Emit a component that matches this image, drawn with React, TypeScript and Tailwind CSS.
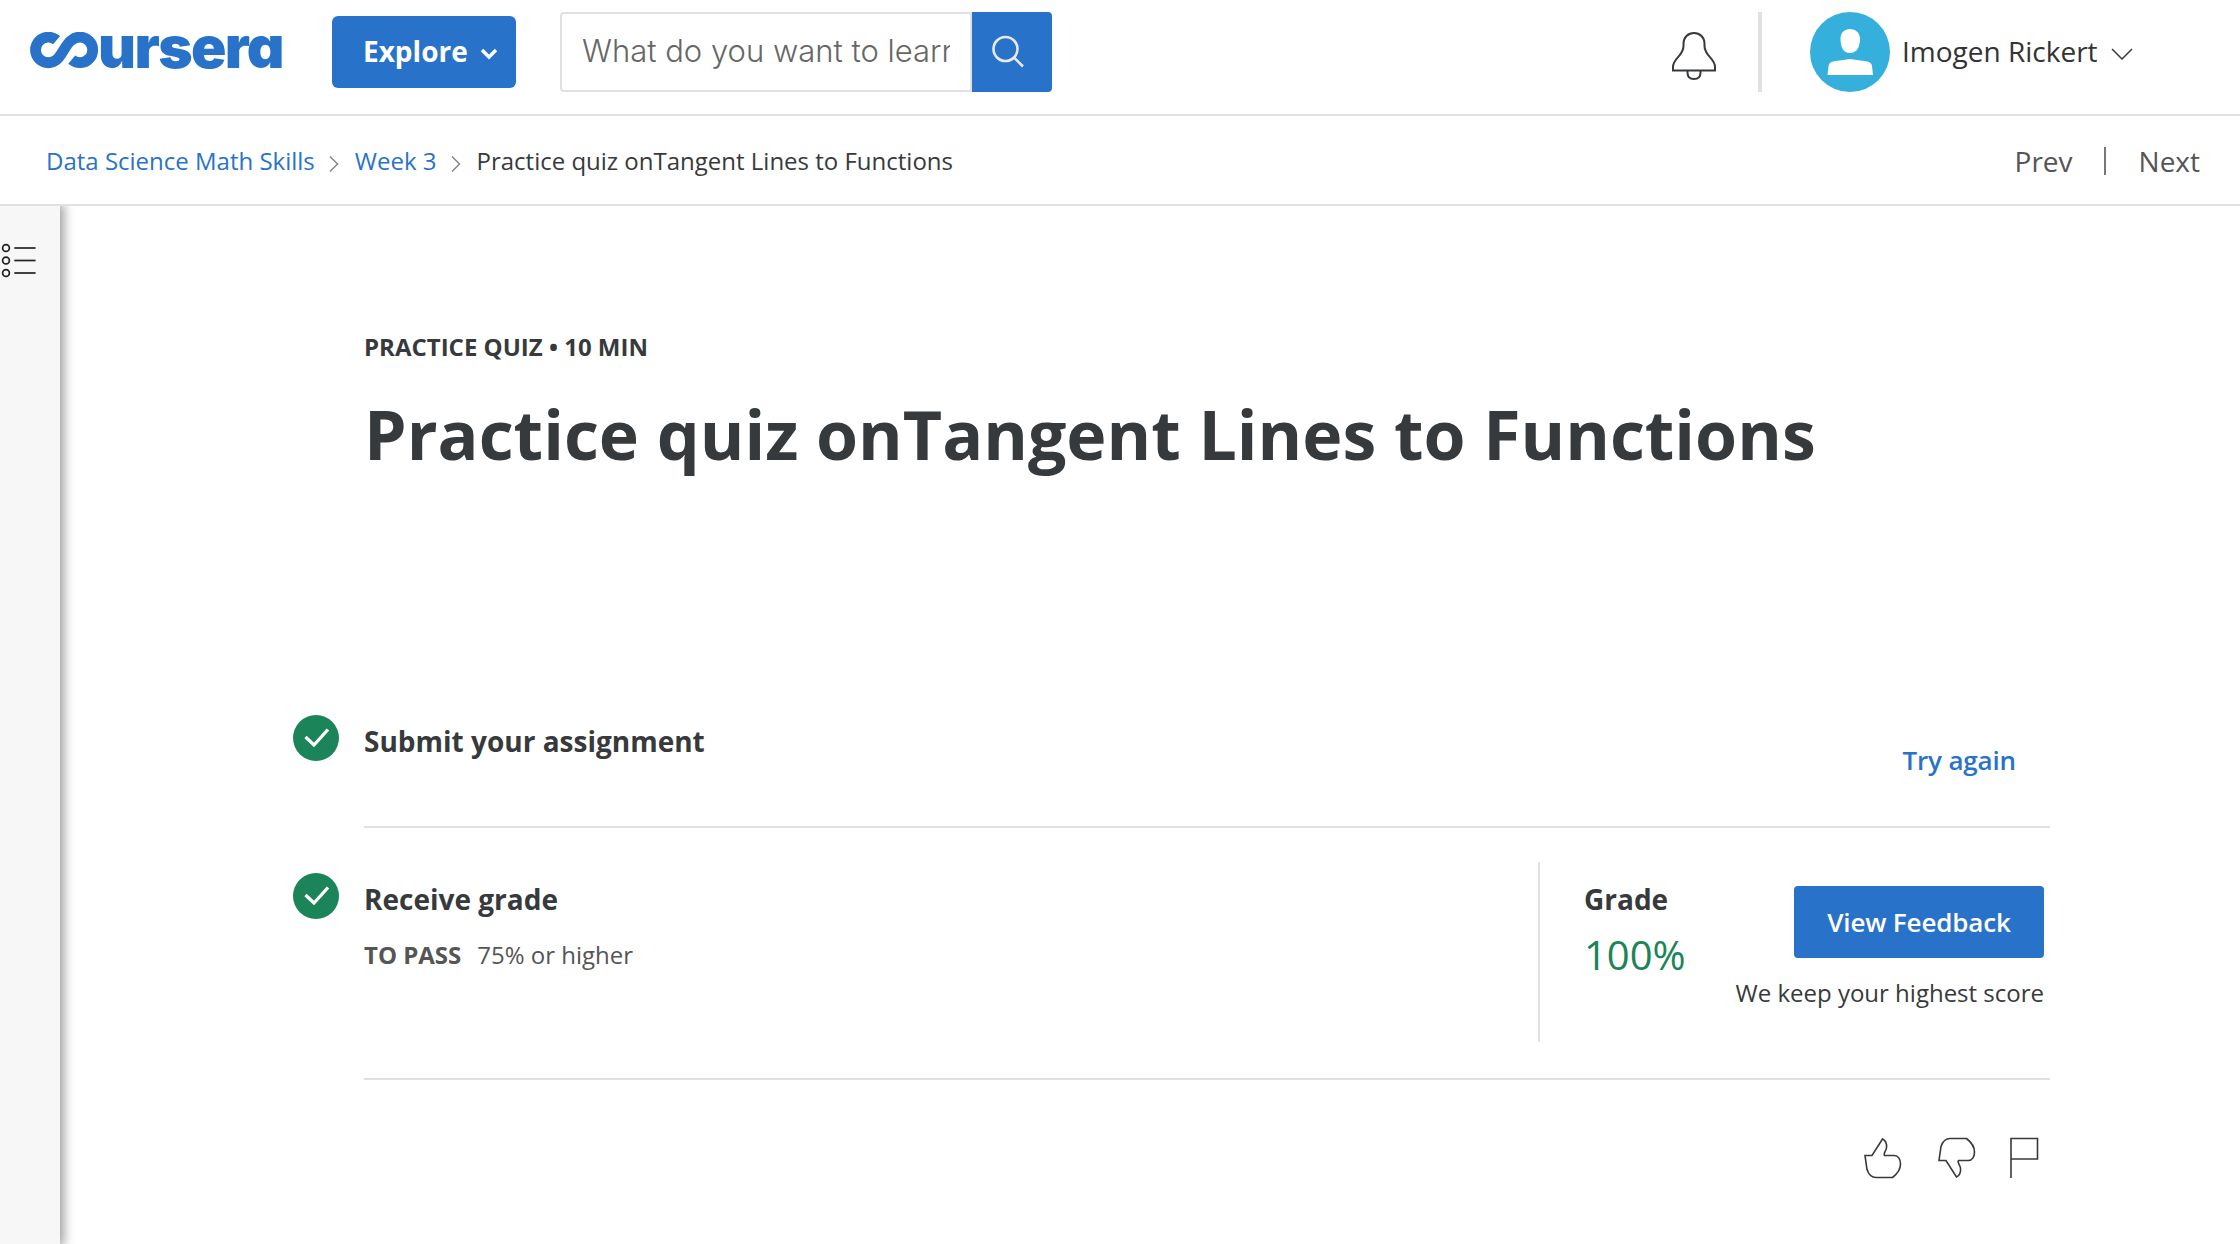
import React from "react";

function Logo() {
  return (
    <div className="flex h-[72px] w-[256px] shrink-0" aria-label="coursera">
      <svg className="mt-[16px] h-[38px] w-[71px] shrink-0" viewBox="0 0 71 38" fill="none" stroke="#2873c9" strokeWidth="10.8">
        <path d="M27.600 8.200A12.800 12.800 0 1 0 28.200 27.200C33.500 22.500 36.500 12.500 42.300 8.400A12.800 12.800 0 1 1 42.700 27.700" />
      </svg>
      <span className="mt-px ml-[-2px] block text-[58.500px] leading-[60px] font-black tracking-[-1.600px] text-[#2873c9] font-['Inter',sans-serif] [font-feature-settings:'cv11']">
        ursera
      </span>
    </div>
  );
}

function Bell() {
  return (
    <svg className="h-[50px] w-[46px]" viewBox="0 0 46 50" fill="none" stroke="#373a3c" strokeWidth="2">
      <path d="M2 39.500V36C2 27 12.500 25 12.500 15V12.500C12.500 6.500 17 2 23 2S33.500 6.500 33.500 12.500V15C33.500 25 44 27 44 36V39.500Z" />
      <path d="M16.500 40V41.500C16.500 45.500 19 48 23 48S29.500 45.500 29.500 41.500V40" />
    </svg>
  );
}

function Avatar() {
  return (
    <svg className="h-20 w-20 shrink-0" viewBox="0 0 80 80">
      <circle cx="40" cy="40" r="40" fill="#35afdb" />
      <path fill="#fff" d="M40 17C45.500 17 50 21 50 26.500C50 34 47.500 41 40 41S30.500 34 30.500 26.500C30.500 21 34.500 17 40 17ZM17.500 63L18.500 54C19 51 21 50 24 49.300L40 47L56 49.300C59.500 50 61.500 51 62 54L63 63Z" />
    </svg>
  );
}

function Header() {
  return (
    <header className="flex h-[116px] items-start border-b-2 border-[#e1e1e1] pt-3 pl-[29px]">
      <div className="mt-1 flex w-[303px]"><Logo /></div>
      <button className="mt-1 flex h-[72px] w-[184px] items-center rounded-md bg-[#2873c9] pl-[31px] text-[28px] font-bold text-white">
        <span className="w-[117px] pb-0.5 text-left">Explore</span>
        <svg className="mt-[3px] h-3 w-[18px]" viewBox="0 0 18 12" fill="none" stroke="#fff" strokeWidth="3.400">
          <path d="M2 2L9 9L16 2" />
        </svg>
      </button>
      <div className="ml-11 flex">
        <div className="flex h-20 w-[412px] items-center rounded-l border-2 border-[#e1e1e1] pb-0.5 pl-5">
          <div className="w-[368px] overflow-hidden text-[31px] leading-[44px] font-light whitespace-nowrap text-[#666] font-['Inter',sans-serif]">
            What do you want to learn
          </div>
        </div>
        <button className="flex h-20 w-20 items-center justify-center rounded-r bg-[#2873c9]">
          <svg className="mr-2 h-[34px] w-[34px]" viewBox="0 0 34 34" fill="none" stroke="#e8e8e8" strokeWidth="2.600">
            <circle cx="14.500" cy="14" r="12" />
            <path d="M23 22.500L32 31.500" />
          </svg>
        </button>
      </div>
      <div className="mr-[107px] ml-auto flex items-start">
        <div className="mt-[19px]"><Bell /></div>
        <div className="ml-[41px] h-20 w-1 bg-[#e1e1e1]" />
        <div className="ml-12 flex h-20 items-center">
          <Avatar />
          <span className="ml-3 w-[209px] pb-0.5 text-[28px] whitespace-nowrap text-[#333]">Imogen Rickert</span>
          <svg className="mt-1 h-3 w-[22px]" viewBox="0 0 22 12" fill="none" stroke="#373a3c" strokeWidth="1.500">
            <path d="M1 1L11 11L21 1" />
          </svg>
        </div>
      </div>
    </header>
  );
}

function Separator() {
  return (
    <svg className="mr-4 ml-[14px] mt-[5px] h-4 w-[10px]" viewBox="0 0 10 16" fill="none" stroke="#888" strokeWidth="1.500">
      <path d="M1 .5L8.500 8L1 15.500" />
    </svg>
  );
}

function Breadcrumbs() {
  return (
    <nav className="flex h-[90px] items-center border-b-2 border-[#e1e1e1] pt-0.5 pr-10 pl-[46px] text-[24px] text-[#373a3c]">
      <a className="text-[#2873c9]">Data Science Math Skills</a>
      <Separator />
      <a className="text-[#2873c9]">Week 3</a>
      <Separator />
      <span>Practice quiz onTangent Lines to Functions</span>
      <div className="ml-auto flex items-center text-[28px] text-[#555]">
        <span>Prev</span>
        <span className="mr-[33px] ml-[31px] h-7 w-0.5 bg-[#777]" />
        <span>Next</span>
      </div>
    </nav>
  );
}

function Check() {
  return (
    <svg className="h-[46px] w-[46px] shrink-0" viewBox="0 0 46 46">
      <circle cx="23" cy="23" r="23" fill="#1b8458" />
      <path d="M12.500 22L21 30L35 14.500" fill="none" stroke="#fff" strokeWidth="3.300" />
    </svg>
  );
}

function Sidebar() {
  return (
    <aside className="w-[60px] shrink-0 bg-[#f7f7f7] pt-[37px] shadow-[2px_0_10px_2px_rgba(0,0,0,0.38)] [clip-path:inset(0_-16px_0_0)]">
      <svg className="h-[36px] w-[38px]" viewBox="0 0 38 36" fill="none" stroke="#222" strokeWidth="1.700">
        {[5, 17.5, 30].map((y) => (
          <g key={y}>
            <circle cx="6" cy={y} r="3.400" />
            <path d={`M14.300 ${y}H35.600`} />
          </g>
        ))}
      </svg>
    </aside>
  );
}

export default function App() {
  return (
    <div className="flex h-[1244px] w-[2240px] flex-col overflow-hidden bg-white text-[#373a3c] font-['Open_Sans',sans-serif]">
      <Header />
      <Breadcrumbs />
      <div className="flex flex-1">
        <Sidebar />
        <main className="flex w-[1990px] flex-col pt-[125px] pl-[233px]">
          <div className="pl-[71px]">
            <div className="text-[24px] leading-8 font-bold">PRACTICE QUIZ • 10 MIN</div>
            <h1 className="mt-[25px] text-[68px] leading-[92px] font-bold whitespace-nowrap">
              Practice quiz onTangent Lines to Functions
            </h1>
          </div>

          <section className="mt-[235px] flex h-[113px]">
            <Check />
            <div className="ml-[25px] flex flex-1 justify-between border-b-2 border-[#e1e1e1] pr-[34px]">
              <h2 className="mt-[6px] text-[28px] leading-10 font-bold">Submit your assignment</h2>
              <button className="mt-[25px] h-10 text-[26px] leading-10 font-[570] tracking-[-0.150px] text-[#2873c9]">Try again</button>
            </div>
          </section>

          <section className="flex h-[252px]">
            <div className="pt-[45px]"><Check /></div>
            <div className="ml-[25px] flex flex-1 border-b-2 border-[#e1e1e1]">
              <div className="w-[1174px] pt-[51px]">
                <h2 className="text-[28px] leading-10 font-bold">Receive grade</h2>
                <div className="mt-[18px] flex gap-4 text-[24px] leading-9 text-[#555]">
                  <span className="font-bold">TO PASS</span>
                  <span>75% or higher</span>
                </div>
              </div>
              <div className="mt-[34px] flex h-[180px] flex-1 border-l-2 border-[#e1e1e1] pr-[6px] pl-11">
                <div className="mt-[17px]">
                  <h2 className="text-[28px] leading-10 font-bold">Grade</h2>
                  <div className="mt-[10px] text-[40px] leading-[52px] text-[#1b8458]">100%</div>
                </div>
                <div className="mt-6 ml-auto flex flex-col items-end">
                  <button className="h-[72px] w-[250px] rounded bg-[#2873c9] text-[26px] font-[570] tracking-[-0.150px] text-white">
                    View Feedback
                  </button>
                  <p className="mt-[17px] text-[24px] leading-9">We keep your highest score</p>
                </div>
              </div>
            </div>
          </section>

          <div className="mt-[57px] flex justify-end pr-[10px]">
            <svg className="h-[42px] w-[40px]" viewBox="0 0 40 42" fill="none" stroke="#373a3c" strokeWidth="1.600">
              <path d="M2 18.500H9L19.500 2C22 3 24.200 6.500 23.500 11C23 14 20 16.500 21.500 18.500H31.500C35 18.500 37.500 22 37.500 27C37.500 32.500 34 37 29.500 40.500H13C8 40.500 5.500 37 4 32.500Z" />
            </svg>
            <svg className="ml-[34px] h-[42px] w-[40px]" viewBox="0 0 40 42" fill="none" stroke="#373a3c" strokeWidth="1.600">
              <path d="M2 23.500H9L19.500 40C22 39 24.200 35.500 23.500 31C23 28 20 25.500 21.500 23.500H31.500C35 23.500 37.500 20 37.500 15C37.500 9.500 34 5 29.500 1.500H13C8 1.500 5.500 5 4 9.500Z" />
            </svg>
            <svg className="ml-[31px] h-[42px] w-[32px]" viewBox="0 0 32 42" fill="none" stroke="#373a3c" strokeWidth="1.600">
              <path d="M3 41V1.500H29.500V22H3" />
            </svg>
          </div>
        </main>
      </div>
    </div>
  );
}
